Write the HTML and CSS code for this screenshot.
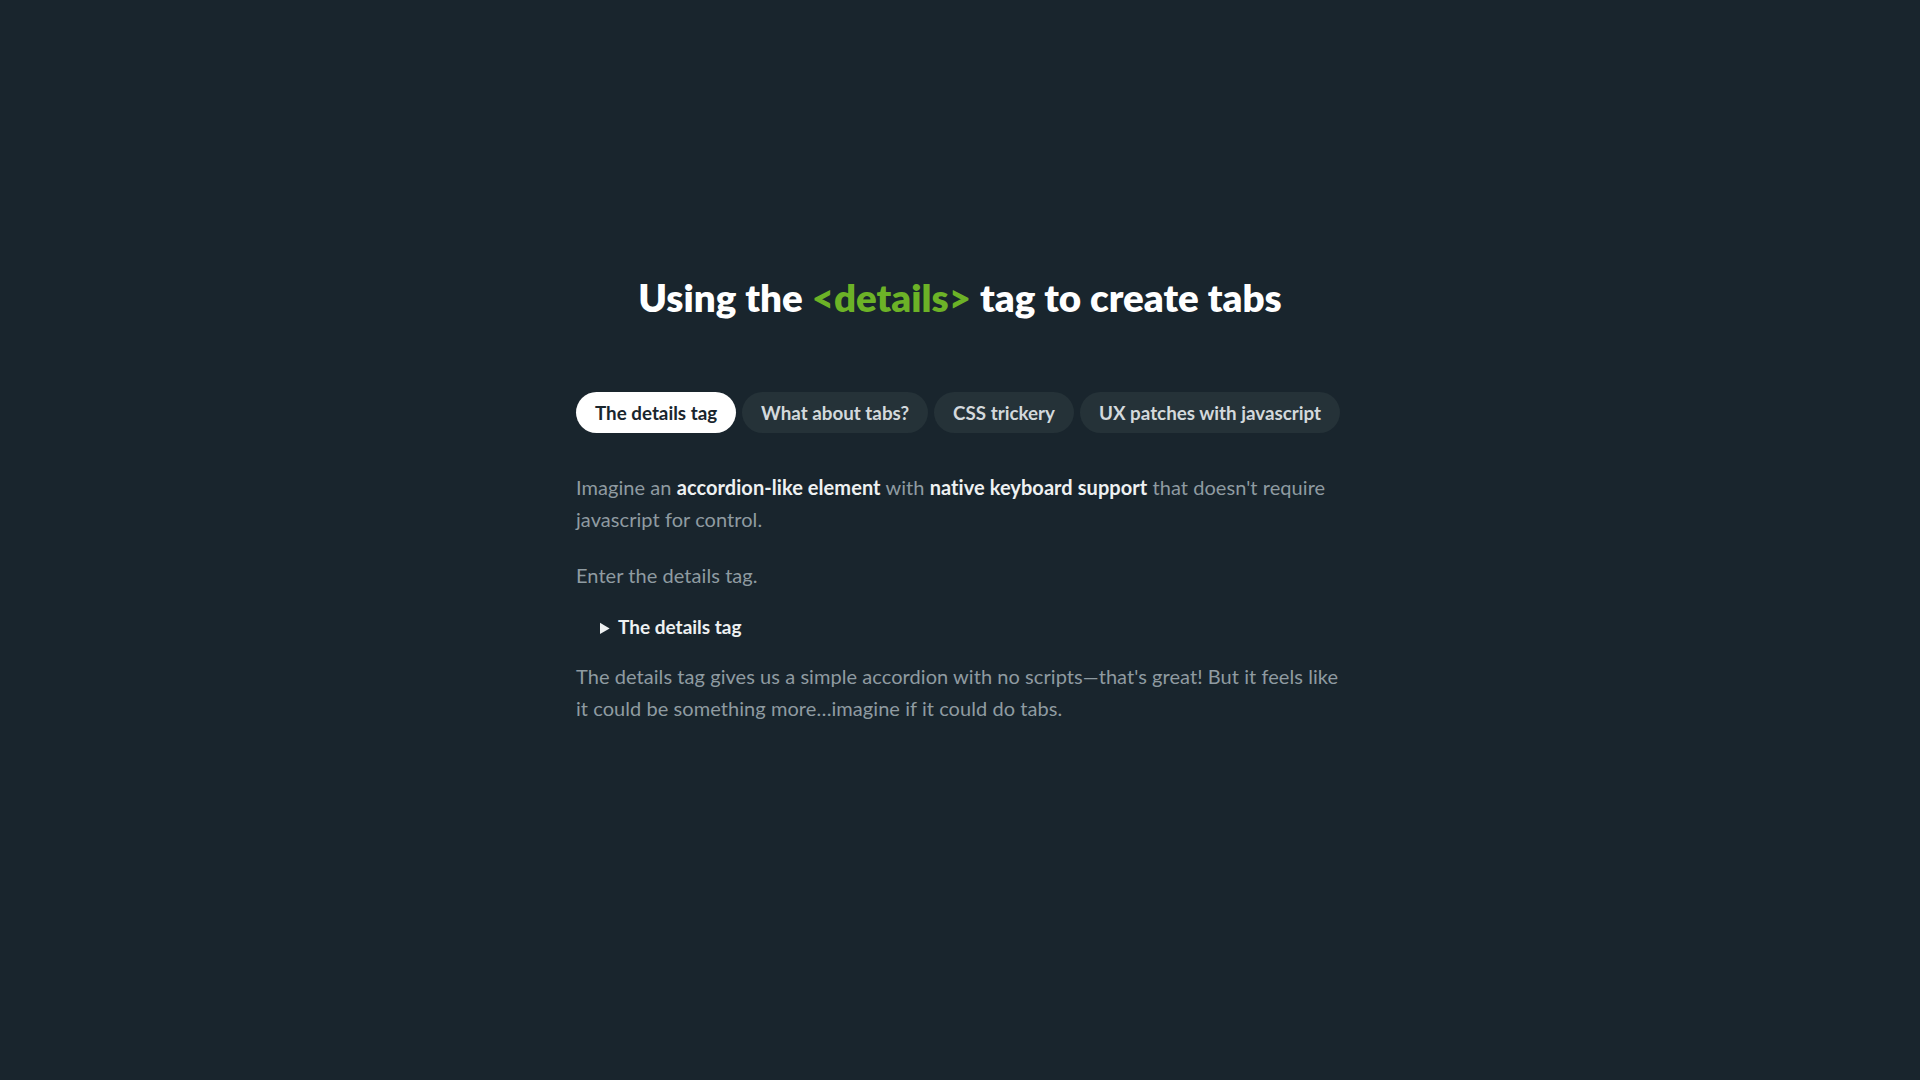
FILE: index.html
```html
<!DOCTYPE html>
<html lang="en">
<head>
<meta charset="utf-8">
<title>Using the details tag to create tabs</title>
<link rel="stylesheet" href="styles.css">
</head>
<body>
<main class="page">
  <h1 class="title">Using the <span class="accent">&lt;details&gt;</span> tag to create tabs</h1>
  <nav class="tabs">
    <button class="tab tab-active">The details tag</button>
    <button class="tab">What about tabs?</button>
    <button class="tab">CSS trickery</button>
    <button class="tab">UX patches with javascript</button>
  </nav>
  <section class="content">
    <p class="text">Imagine an <strong>accordion-like element</strong> with <strong>native keyboard support</strong> that doesn't require javascript for control.</p>
    <p class="text">Enter the details tag.</p>
    <details class="demo">
      <summary class="demo-summary">The details tag</summary>
    </details>
    <p class="text">The details tag gives us a simple accordion with no scripts—that's great! But it feels like it could be something more…imagine if it could do tabs.</p>
  </section>
</main>
</body>
</html>
```
FILE: styles.css
```css
html, body {
  margin: 0;
  padding: 0;
}
body {
  background: #19252d;
  font-family: Lato, "Liberation Sans", sans-serif;
  color: #8f9ba1;
  min-height: 1080px;
}
.page {
  max-width: 768px;
  margin: 0 auto;
  padding-top: 276px;
}
.title {
  margin: 0;
  text-align: center;
  font-size: 38.5px;
  font-weight: 800;
  line-height: 43px;
  color: #ffffff;
  letter-spacing: 0;
}
.accent {
  color: #6cb227;
}
.tabs {
  display: flex;
  gap: 6px;
  margin-top: 73px;
}
.tab {
  flex: 0 0 auto;
  white-space: nowrap;
  font-family: inherit;
  font-size: 18.8px;
  font-weight: 700;
  height: 41px;
  padding: 0 19px;
  border: 0;
  border-radius: 999px;
  background: #253238;
  color: #d3d9dc;
  cursor: pointer;
}
.tab-active {
  background: #ffffff;
  color: #19252d;
}
.content {
  margin-top: 38px;
}
.text {
  margin: 0 0 24px;
  font-size: 20px;
  line-height: 32px;
  font-weight: 400;
  letter-spacing: 0.06px;
}
.text strong {
  color: #eef1f2;
  font-weight: 700;
}
.demo {
  margin: -4px 0 16px;
  padding-left: 24px;
}
.demo-summary {
  font-size: 19px;
  font-weight: 700;
  line-height: 32px;
  color: #eef1f2;
  cursor: pointer;
}
.demo-summary::marker {
  font-size: 17px;
}
```
